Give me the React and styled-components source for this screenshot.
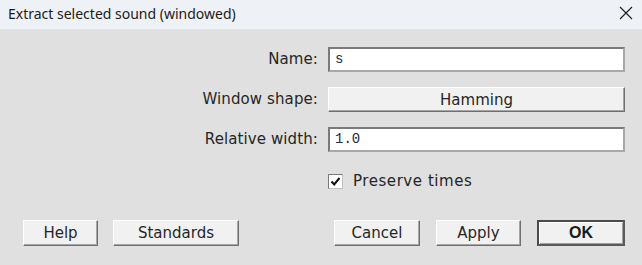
import React from "react";
import styled, { createGlobalStyle } from "styled-components";

const Global = createGlobalStyle`
  html, body { margin: 0; padding: 0; background: #e0e0e0; }
  * { box-sizing: border-box; }
`;

const Window = styled.div`
  width: 642px;
  height: 265px;
  display: flex;
  flex-direction: column;
  background: #e0e0e0;
  overflow: hidden;
`;

const TitleBar = styled.div`
  height: 29px;
  flex: none;
  display: flex;
  align-items: center;
  justify-content: space-between;
  padding: 0 8px 0 8px;
  background: #eef2f7;
  font-family: "Noto Sans", sans-serif;
  font-size: 14px;
  color: #1b1b1b;
`;

const Title = styled.span`
  line-height: 29px;
  margin-top: -2px;
`;

const CloseIcon = styled.svg`
  width: 14px;
  height: 14px;
  margin-right: 1px;
  margin-top: -3px;
`;

const Body = styled.div`
  flex: 1;
  display: flex;
  flex-direction: column;
  padding: 18px 17px 0 23px;
  font-family: "DejaVu Sans", sans-serif;
  font-size: 15px;
  color: #262626;
`;

const Form = styled.div`
  display: grid;
  grid-template-columns: 1fr 297px;
  column-gap: 10px;
  row-gap: 15px;
  align-items: center;
`;

const Label = styled.div`
  text-align: right;
  line-height: 25px;
  letter-spacing: 0.1px;
`;

const TextField = styled.div`
  height: 25px;
  background: #ffffff;
  border: 2px solid;
  border-color: #7a7a7a #a8a8a8 #a8a8a8 #7a7a7a;
  padding-left: 5px;
  font-family: "Liberation Mono", monospace;
  font-size: 14px;
  line-height: 21px;
  color: #1c2a48;
`;

const Button = styled.div`
  height: ${(p) => p.h || 26}px;
  width: ${(p) => p.w}px;
  flex: none;
  display: flex;
  align-items: center;
  justify-content: center;
  background: #f1f1f1;
  border: 1px solid;
  border-color: #ffffff #6f6f6f #6f6f6f #ffffff;
  box-shadow: inset -1px -1px 0 #a6a6a6;
  font-family: "DejaVu Sans", sans-serif;
  font-size: 15px;
  color: #262626;
  ${(p) =>
    p.$default &&
    `
    border: 2px solid #4a4a4a;
    border-right-color: #5a5a5a;
    border-bottom-color: #5a5a5a;
    box-shadow: inset 1px 1px 0 #ffffff, inset -1px -1px 0 #a0a0a0;
    font-weight: bold;
    font-family: "Liberation Sans", sans-serif;
    font-size: 16px;
    color: #1a1a1a;
  `}
`;

const CheckRow = styled.div`
  grid-column: 2;
  display: flex;
  align-items: center;
  gap: 10px;
  margin-top: 5px;
`;

const CheckLabel = styled.span`
  letter-spacing: 0.55px;
`;

const CheckBox = styled.div`
  width: 15px;
  height: 15px;
  background: #fff;
  border: 1px solid;
  border-color: #7a7a7a #c0c0c0 #c0c0c0 #7a7a7a;
  display: flex;
  align-items: center;
  justify-content: center;
`;

const ButtonBar = styled.div`
  display: flex;
  align-items: center;
  margin-top: 30px;
`;

const Group = styled.div`
  display: flex;
  gap: ${(p) => p.gap || 15}px;
  align-items: center;
`;

const Spacer = styled.div`
  flex: 1;
`;

export default function App() {
  return (
    <>
      <Global />
      <Window>
        <TitleBar>
          <Title>Extract selected sound (windowed)</Title>
          <CloseIcon viewBox="0 0 14 14">
            <path d="M1 1 L13 13 M13 1 L1 13" stroke="#1b1b1b" strokeWidth="1.1" fill="none" />
          </CloseIcon>
        </TitleBar>
        <Body>
          <Form>
            <Label>Name:</Label>
            <TextField>s</TextField>
            <Label>Window shape:</Label>
            <Button h={25}>Hamming</Button>
            <Label>Relative width:</Label>
            <TextField>1.0</TextField>
            <CheckRow>
              <CheckBox>
                <svg width="11" height="11" viewBox="0 0 11 11">
                  <path d="M1.5 5.5 L4.2 8.5 L9.5 2" stroke="#111" strokeWidth="2" fill="none" />
                </svg>
              </CheckBox>
              <CheckLabel>Preserve times</CheckLabel>
            </CheckRow>
          </Form>
          <ButtonBar>
            <Group gap={15}>
              <Button w={75}>Help</Button>
              <Button w={126}>Standards</Button>
            </Group>
            <Spacer />
            <Group gap={16}>
              <Button w={86}>Cancel</Button>
              <Button w={85}>Apply</Button>
              <Button w={88} $default>OK</Button>
            </Group>
          </ButtonBar>
        </Body>
      </Window>
    </>
  );
}
